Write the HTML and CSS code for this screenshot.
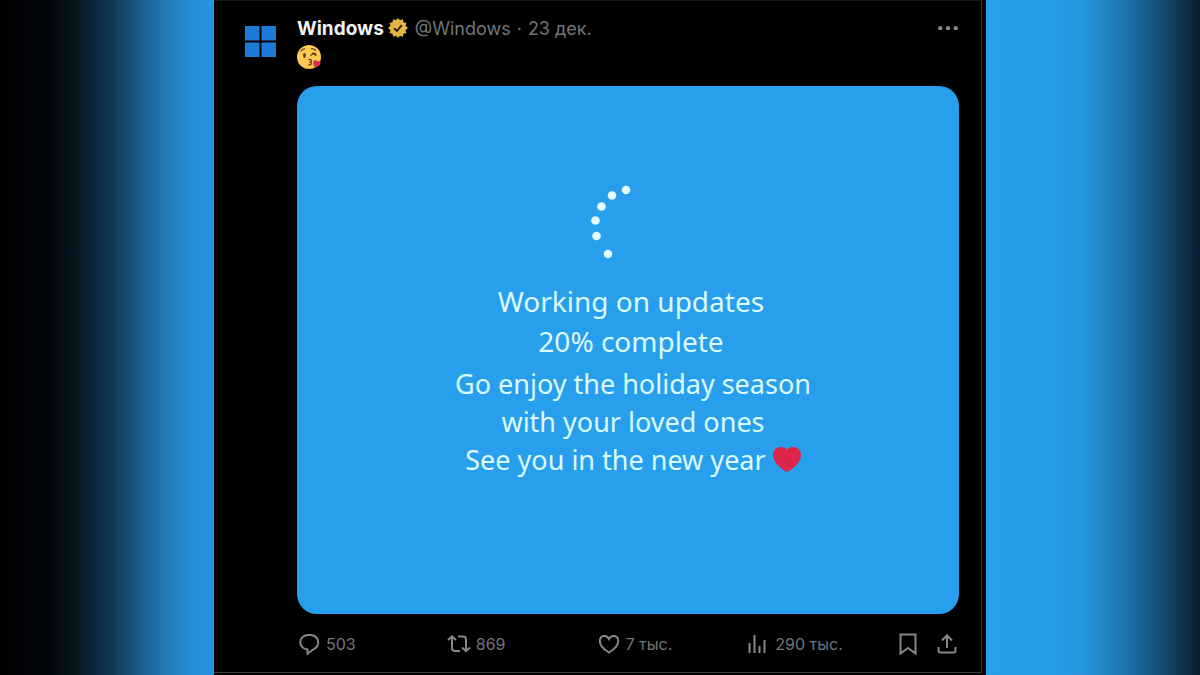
FILE: index.html
```
<!DOCTYPE html>
<html lang="ru">
<head>
    <meta charset="UTF-8">
    <title>Windows</title>
    <link rel="stylesheet" href="styles.css">
</head>
<body>
<main class="wrap">
    <article class="post">
        <a class="avatar" href="#" aria-label="Windows">
            <svg viewBox="0 0 31 31"><path d="M0 0h14.500v14.500H0zM16.500 0H31v14.500H16.500zM0 16.500h14.500V31H0zM16.500 16.500H31V31H16.500z"/></svg>
        </a>
        <div class="content">
            <header class="head">
                <a class="name" href="#">Windows</a>
                <svg class="badge" viewBox="0 0 20 20">
                    <path fill="#e2b544" d="M10 0l2 2.300 2.900-1 .6 3 3 .6-1 2.900L20 10l-2.500 2.200 1 2.900-3 .6-.6 3-2.900-1L10 20l-2-2.300-2.900 1-.6-3-3-.6 1-2.900L0 10l2.500-2.200-1-2.900 3-.6.6-3 2.900 1z"/>
                    <path fill="none" stroke="#2a2010" stroke-width="1.900" d="M6 10.300l2.900 2.700 4.900-5.800"/>
                </svg>
                <div class="meta">
                    <a href="#">@Windows</a>
                    <span>·</span>
                    <a href="#">23 дек.</a>
                </div>
                <button class="more" aria-label="Ещё">
                    <svg viewBox="0 0 20 4"><circle cx="3" cy="2" r="1.900"/><circle cx="10" cy="2" r="1.900"/><circle cx="17" cy="2" r="1.900"/></svg>
                </button>
            </header>
            <svg class="kiss" viewBox="0 0 24 24">
                <circle cx="12" cy="12" r="12" fill="#fbcb55"/>
                <g fill="none" stroke="#664016" stroke-width="1.300" stroke-linecap="round">
                    <path d="M4 6.200q1.300-2.200 3.600-2.300M14.500 3.700q2.500-.2 4 1.500M14 10.300q2.200-2.400 5 .2M15.500 8.400q1.500-.7 3.200.5M12 14.500q3-.2 2.400 1.500-.5 1-2 1.100 2 .1 2 1.400-.2 1.500-2.600 1.300"/>
                </g>
                <ellipse cx="7.500" cy="10.500" rx="1.500" ry="2.400" fill="#664016"/>
                <path fill="#dd2e50" d="M18.300 22.500c-2.200-2-3-4.700-1.700-6.500 1.300-1.500 3-1 3.500.6 1.500-1.300 3.600-.5 3.500 1.300-.1 2.100-2.500 3.900-5.300 4.600z"/>
            </svg>
            <section class="media">
                <svg class="dots" viewBox="0 0 44 76">
                    <circle cx="37" cy="6" r="4.300"/><circle cx="23" cy="11.500" r="4.300"/><circle cx="12.500" cy="22.500" r="4.300"/>
                    <circle cx="6.500" cy="36.500" r="4.300"/><circle cx="7.500" cy="52" r="4.300"/><circle cx="19" cy="70" r="4.300"/>
                </svg>
                <p class="status">Working on updates<br>20% complete</p>
                <p class="wish">Go enjoy the holiday season<br>with your loved ones<br>See you in the new year
                    <svg class="heart" viewBox="0 0 28 25"><path d="M14 25C7 21 0 15 0 8 0 3 3.500 0 7.500 0 10.500 0 12.500 .8 14 2.600 15.500 .8 17.500 0 20.500 0 24.500 0 28 3 28 8c0 7-7 13-14 17z"/></svg></p>
            </section>
            <footer class="actions">
                <button><svg viewBox="0 0 24 24"><path d="M10.500 3h3a8.300 7.500 0 0 1 3.500 14L10.500 21.500V17.500A8.300 7.300 0 0 1 10.500 3z"/></svg>503</button>
                <button><svg viewBox="0 0 24 24"><path d="M1 8l4-3.700L9 8M5 5v11a3 3 0 0 0 3 3h5M11 4.500h5a3 3 0 0 1 3 3v11.500M15 15.500l4 3.700 4-3.700"/></svg>869</button>
                <button><svg viewBox="0 0 24 24"><path d="M12 20.500C6 17 2.800 13 2.800 9c0-5.500 6.700-7 9.200-2 2.500-5 9.200-3.500 9.200 2 0 4-3.200 8-9.200 11.500z"/></svg>7 тыс.</button>
                <button><svg viewBox="0 0 24 24"><path d="M3.500 21V11M8.500 21V3M13.500 21v-7M18.500 21V8"/></svg>290 тыс.</button>
                <div class="tools">
                    <button aria-label="Закладка"><svg viewBox="0 0 24 24"><path d="M4.500 2.500h15v19L12 16l-7.500 5.500z"/></svg></button>
                    <button aria-label="Поделиться"><svg viewBox="0 0 24 24"><path d="M12 16V3.500M7 8.500l5-5 5 5M3.500 15v3.500a2 2 0 0 0 2 2h13a2 2 0 0 0 2-2V15"/></svg></button>
                </div>
            </footer>
        </div>
    </article>
</main>
</body>
</html>
```

FILE: styles.css
```
*{
    margin:0;
    padding:0;
    box-sizing: border-box;
}

body{
    min-height: 100vh;
    color: #71767b;
    font-family: Inter, "Noto Sans", sans-serif;
    background: linear-gradient(90deg, #000 0, #03070c 4%, #04131a 6%, #0c2235 7.500%, #123a55 9.500%, #1b6294 12%, #227db8 14%, #258fd8 16%, #2896e2 18%, #289eec 82%, #279eea 87%, #2696e0 90%, #2280bd 92.500%, #1c6ba0 94.500%, #164f78 96.500%, #10344c 98.500%, #091d30 100%);
}
a{
    color: inherit;
    text-decoration: none;
}
button{
    display: flex;
    align-items: center;
    border: 0;
    background: none;
    color: inherit;
    font: inherit;
    cursor: pointer;
}

.wrap{
    max-width: 772px;
    min-height: 100vh;
    margin: 0 auto;
    padding: 0 4px 2px 0;
    background-color: #000;
}
.post{
    display: flex;
    gap: 21px;
    padding: 15px 22px 16px 31px;
    border: 1px solid #3a3b3d;
    border-width: 1px 1px 1px 0;
    border-top-color: #161718;
}
.avatar{
    flex: none;
    width: 31px;
    margin-top: 10px;
}
.avatar svg{
    display: block;
    fill: #1b7bd6;
}
.content{
    flex: 1;
    min-width: 0;
}

.head{
    display: flex;
    align-items: center;
    gap: 4px;
    height: 24px;
}
.name{
    color: #f0f1f2;
    font-size: 19px;
    font-weight: 700;
}
.badge{
    width: 20px;
    height: 20px;
}
.meta{
    display: flex;
    gap: 6px;
    margin-left: 3px;
    font-size: 18px;
}
.more{
    margin-left: auto;
}
.more svg{
    width: 22px;
    fill: #8a8d90;
}
.kiss{
    display: block;
    width: 24px;
    height: 24px;
    margin: 5px 0 17px;
}

.media{
    display: flex;
    flex-direction: column;
    align-items: center;
    aspect-ratio: 662 / 528;
    padding: 98px 0 0 10px;
    border-radius: 20px;
    background-color: #289fed;
    color: #dcfbff;
    font-family: "Noto Sans", "Open Sans", sans-serif;
    text-align: center;
}
.dots{
    width: 44px;
    height: 76px;
    margin-right: 44px;
    fill: #e4fdff;
}
.status{
    margin: 21px 4px 4px 0;
    font-size: 28px;
    line-height: 40px;
}
.wish{
    font-size: 27px;
    line-height: 38px;
}
.heart{
    width: 28px;
    height: 25px;
    fill: #dc2548;
    vertical-align: -2px;
}

.actions{
    display: grid;
    grid-template-columns: repeat(4, 1fr) auto;
    align-items: center;
    height: 24px;
    margin-top: 18px;
    font-size: 16px;
}
.actions button{
    gap: 5px;
}
.actions svg{
    width: 24px;
    height: 24px;
    fill: none;
    stroke: #85888b;
    stroke-width: 2;
}
.tools{
    display: flex;
    gap: 15px;
}
```
